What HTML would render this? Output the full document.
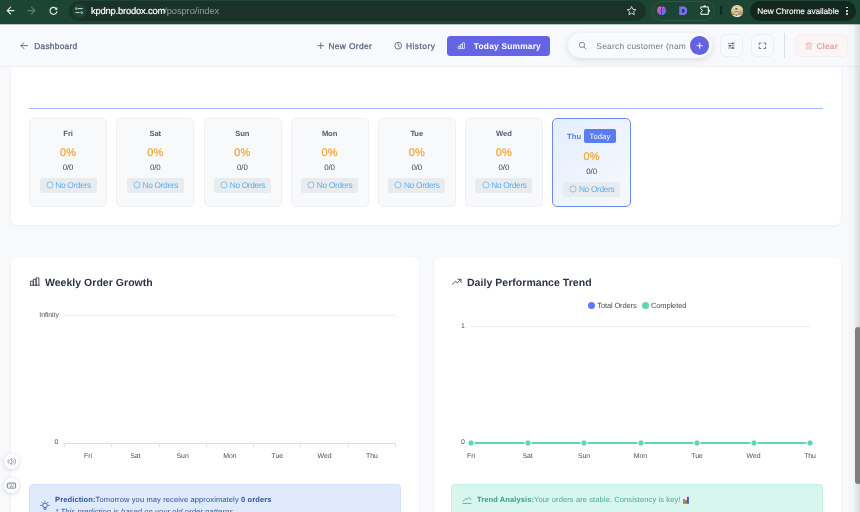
<!DOCTYPE html>
<html>
<head>
<meta charset="utf-8">
<style>
*{box-sizing:border-box;margin:0;padding:0}
html,body{width:860px;height:512px;overflow:hidden;background:#f8f9fb;font-family:"Liberation Sans",sans-serif;}
body{position:relative}
.abs{position:absolute}
.t{position:absolute;white-space:pre;text-rendering:geometricPrecision}
svg{position:absolute;overflow:visible}
#chrome{left:0;top:0;width:860px;height:24px;background:#1c4533;border-bottom:0}
#url{left:69px;top:1px;width:577px;height:19.5px;border-radius:10px;background:#1a322a;}
#header{left:0;top:24px;width:860px;height:42.5px;background:#f8f9fc;border-bottom:1px solid #eceef3;}
#card1{left:11px;top:60px;width:830px;height:165px;background:#fff;border-radius:6px;box-shadow:0 1px 3px rgba(20,30,60,.05)}
#hr{left:29px;top:107.5px;width:794px;height:1px;background:#a9b8f8}
.day{position:absolute;top:118px;width:78px;height:88.5px;background:#f8f9fb;border:1px solid #eef0f4;border-radius:5px}
.day.today{background:linear-gradient(135deg,#e5eefd,#f6f9fd);border:1.2px solid #6b8bf0;width:79px}
.bd{position:absolute;height:14.5px;width:57px;background:#e9ecef;border-radius:2px}
.card{position:absolute;top:257px;height:270px;background:#fff;border-radius:6px;box-shadow:0 1px 3px rgba(20,30,60,.05)}
</style>
</head>
<body><div id="root" style="position:absolute;left:0;top:0;width:860px;height:512px;will-change:transform;overflow:hidden">

<div id="card1" class="abs"></div><div id="hr" class="abs"></div>
<div class="day" style="left:29.20px"></div>
<div class="t" style="left:68.05px;top:130px;font-size:7.6px;line-height:7.6px;color:#525c72;letter-spacing:-0.1px;font-weight:bold;font-style:normal;transform:translateX(-50%);">Fri</div>
<div class="t" style="left:68.05px;top:148px;font-size:11px;line-height:11px;color:#f2a83c;letter-spacing:0.1px;font-weight:normal;font-style:normal;transform:translateX(-50%);-webkit-text-stroke:0.25px #f2a83c">0%</div>
<div class="t" style="left:68.05px;top:164px;font-size:7.9px;line-height:7.9px;color:#3d4350;letter-spacing:-0.12px;font-weight:normal;font-style:normal;transform:translateX(-50%);">0/0</div>
<div class="bd" style="left:39.55px;top:178px"></div>
<svg style="left:45.70px;top:180.8px" width="8" height="8" viewBox="0 0 8 8" fill="none"><circle cx="4" cy="4" r="3.1" stroke="#5ab0ee" stroke-width="0.7"/></svg>
<div class="t" style="left:55.35px;top:181px;font-size:8.4px;line-height:8.4px;color:#5ab0ee;letter-spacing:-0.349px;font-weight:normal;font-style:normal;">No Orders</div>
<div class="day" style="left:116.37px"></div>
<div class="t" style="left:155.22px;top:130px;font-size:7.6px;line-height:7.6px;color:#525c72;letter-spacing:-0.1px;font-weight:bold;font-style:normal;transform:translateX(-50%);">Sat</div>
<div class="t" style="left:155.22px;top:148px;font-size:11px;line-height:11px;color:#f2a83c;letter-spacing:0.1px;font-weight:normal;font-style:normal;transform:translateX(-50%);-webkit-text-stroke:0.25px #f2a83c">0%</div>
<div class="t" style="left:155.22px;top:164px;font-size:7.9px;line-height:7.9px;color:#3d4350;letter-spacing:-0.12px;font-weight:normal;font-style:normal;transform:translateX(-50%);">0/0</div>
<div class="bd" style="left:126.72px;top:178px"></div>
<svg style="left:132.87px;top:180.8px" width="8" height="8" viewBox="0 0 8 8" fill="none"><circle cx="4" cy="4" r="3.1" stroke="#5ab0ee" stroke-width="0.7"/></svg>
<div class="t" style="left:142.52px;top:181px;font-size:8.4px;line-height:8.4px;color:#5ab0ee;letter-spacing:-0.349px;font-weight:normal;font-style:normal;">No Orders</div>
<div class="day" style="left:203.54px"></div>
<div class="t" style="left:242.39px;top:130px;font-size:7.6px;line-height:7.6px;color:#525c72;letter-spacing:-0.1px;font-weight:bold;font-style:normal;transform:translateX(-50%);">Sun</div>
<div class="t" style="left:242.39px;top:148px;font-size:11px;line-height:11px;color:#f2a83c;letter-spacing:0.1px;font-weight:normal;font-style:normal;transform:translateX(-50%);-webkit-text-stroke:0.25px #f2a83c">0%</div>
<div class="t" style="left:242.39px;top:164px;font-size:7.9px;line-height:7.9px;color:#3d4350;letter-spacing:-0.12px;font-weight:normal;font-style:normal;transform:translateX(-50%);">0/0</div>
<div class="bd" style="left:213.89px;top:178px"></div>
<svg style="left:220.04px;top:180.8px" width="8" height="8" viewBox="0 0 8 8" fill="none"><circle cx="4" cy="4" r="3.1" stroke="#5ab0ee" stroke-width="0.7"/></svg>
<div class="t" style="left:229.69px;top:181px;font-size:8.4px;line-height:8.4px;color:#5ab0ee;letter-spacing:-0.349px;font-weight:normal;font-style:normal;">No Orders</div>
<div class="day" style="left:290.71px"></div>
<div class="t" style="left:329.56px;top:130px;font-size:7.6px;line-height:7.6px;color:#525c72;letter-spacing:-0.1px;font-weight:bold;font-style:normal;transform:translateX(-50%);">Mon</div>
<div class="t" style="left:329.56px;top:148px;font-size:11px;line-height:11px;color:#f2a83c;letter-spacing:0.1px;font-weight:normal;font-style:normal;transform:translateX(-50%);-webkit-text-stroke:0.25px #f2a83c">0%</div>
<div class="t" style="left:329.56px;top:164px;font-size:7.9px;line-height:7.9px;color:#3d4350;letter-spacing:-0.12px;font-weight:normal;font-style:normal;transform:translateX(-50%);">0/0</div>
<div class="bd" style="left:301.06px;top:178px"></div>
<svg style="left:307.21px;top:180.8px" width="8" height="8" viewBox="0 0 8 8" fill="none"><circle cx="4" cy="4" r="3.1" stroke="#5ab0ee" stroke-width="0.7"/></svg>
<div class="t" style="left:316.86px;top:181px;font-size:8.4px;line-height:8.4px;color:#5ab0ee;letter-spacing:-0.349px;font-weight:normal;font-style:normal;">No Orders</div>
<div class="day" style="left:377.88px"></div>
<div class="t" style="left:416.73px;top:130px;font-size:7.6px;line-height:7.6px;color:#525c72;letter-spacing:-0.1px;font-weight:bold;font-style:normal;transform:translateX(-50%);">Tue</div>
<div class="t" style="left:416.73px;top:148px;font-size:11px;line-height:11px;color:#f2a83c;letter-spacing:0.1px;font-weight:normal;font-style:normal;transform:translateX(-50%);-webkit-text-stroke:0.25px #f2a83c">0%</div>
<div class="t" style="left:416.73px;top:164px;font-size:7.9px;line-height:7.9px;color:#3d4350;letter-spacing:-0.12px;font-weight:normal;font-style:normal;transform:translateX(-50%);">0/0</div>
<div class="bd" style="left:388.23px;top:178px"></div>
<svg style="left:394.38px;top:180.8px" width="8" height="8" viewBox="0 0 8 8" fill="none"><circle cx="4" cy="4" r="3.1" stroke="#5ab0ee" stroke-width="0.7"/></svg>
<div class="t" style="left:404.03px;top:181px;font-size:8.4px;line-height:8.4px;color:#5ab0ee;letter-spacing:-0.349px;font-weight:normal;font-style:normal;">No Orders</div>
<div class="day" style="left:465.05px"></div>
<div class="t" style="left:503.90000000000003px;top:130px;font-size:7.6px;line-height:7.6px;color:#525c72;letter-spacing:-0.1px;font-weight:bold;font-style:normal;transform:translateX(-50%);">Wed</div>
<div class="t" style="left:503.90000000000003px;top:148px;font-size:11px;line-height:11px;color:#f2a83c;letter-spacing:0.1px;font-weight:normal;font-style:normal;transform:translateX(-50%);-webkit-text-stroke:0.25px #f2a83c">0%</div>
<div class="t" style="left:503.90000000000003px;top:164px;font-size:7.9px;line-height:7.9px;color:#3d4350;letter-spacing:-0.12px;font-weight:normal;font-style:normal;transform:translateX(-50%);">0/0</div>
<div class="bd" style="left:475.40px;top:178px"></div>
<svg style="left:481.55px;top:180.8px" width="8" height="8" viewBox="0 0 8 8" fill="none"><circle cx="4" cy="4" r="3.1" stroke="#5ab0ee" stroke-width="0.7"/></svg>
<div class="t" style="left:491.2px;top:181px;font-size:8.4px;line-height:8.4px;color:#5ab0ee;letter-spacing:-0.349px;font-weight:normal;font-style:normal;">No Orders</div>
<div class="day today" style="left:552.20px"></div>
<div class="t" style="left:567.0px;top:133px;font-size:7.6px;line-height:7.6px;color:#5277e8;letter-spacing:0.093px;font-weight:bold;font-style:normal;">Thu</div>
<div class="abs" style="left:583.6px;top:129.3px;width:32.4px;height:14px;border-radius:2px;background:#5b7bf0"></div>
<div class="t" style="left:589.5px;top:133px;font-size:7.6px;line-height:7.6px;color:#fff;letter-spacing:0.127px;font-weight:normal;font-style:normal;">Today</div>
<div class="t" style="left:591.6px;top:152px;font-size:11px;line-height:11px;color:#f2a83c;letter-spacing:0.1px;font-weight:normal;font-style:normal;transform:translateX(-50%);-webkit-text-stroke:0.25px #f2a83c">0%</div>
<div class="t" style="left:591.6px;top:168px;font-size:7.9px;line-height:7.9px;color:#3d4350;letter-spacing:-0.12px;font-weight:normal;font-style:normal;transform:translateX(-50%);">0/0</div>
<div class="bd" style="left:563.10px;top:182px"></div>
<svg style="left:569.25px;top:184.8px" width="8" height="8" viewBox="0 0 8 8" fill="none"><circle cx="4" cy="4" r="3.1" stroke="#5ab0ee" stroke-width="0.7"/></svg>
<div class="t" style="left:578.9px;top:185px;font-size:8.4px;line-height:8.4px;color:#5ab0ee;letter-spacing:-0.349px;font-weight:normal;font-style:normal;">No Orders</div>
<div class="card" style="left:11px;width:407.6px"></div>
<div class="card" style="left:433.7px;width:407.5px"></div>
<div class="t" style="left:44.9px;top:278px;font-size:10.5px;line-height:10.5px;color:#2c3347;letter-spacing:0.038px;font-weight:bold;font-style:normal;">Weekly Order Growth</div>
<div class="t" style="left:467.0px;top:278px;font-size:10.5px;line-height:10.5px;color:#2c3347;letter-spacing:0.038px;font-weight:bold;font-style:normal;">Daily Performance Trend</div>
<div class="abs" style="left:64.4px;top:315.2px;width:331px;height:1px;background:#ececec"></div>
<div class="abs" style="left:64.4px;top:442.7px;width:331px;height:1px;background:#dcdcdc"></div>
<div class="abs" style="left:63.90px;top:442.7px;width:1px;height:4.5px;background:#e3e3e3"></div>
<div class="abs" style="left:111.20px;top:442.7px;width:1px;height:4.5px;background:#e3e3e3"></div>
<div class="abs" style="left:158.50px;top:442.7px;width:1px;height:4.5px;background:#e3e3e3"></div>
<div class="abs" style="left:205.80px;top:442.7px;width:1px;height:4.5px;background:#e3e3e3"></div>
<div class="abs" style="left:253.10px;top:442.7px;width:1px;height:4.5px;background:#e3e3e3"></div>
<div class="abs" style="left:300.40px;top:442.7px;width:1px;height:4.5px;background:#e3e3e3"></div>
<div class="abs" style="left:347.70px;top:442.7px;width:1px;height:4.5px;background:#e3e3e3"></div>
<div class="abs" style="left:395.00px;top:442.7px;width:1px;height:4.5px;background:#e3e3e3"></div>
<div class="t" style="left:39.3px;top:313px;font-size:6.9px;line-height:6.9px;color:#4e4e4e;letter-spacing:-0.04px;font-weight:normal;font-style:normal;">Infinity</div>
<div class="t" style="left:54.4px;top:440px;font-size:6.9px;line-height:6.9px;color:#4e4e4e;letter-spacing:0px;font-weight:normal;font-style:normal;">0</div>
<div class="t" style="left:88.05px;top:454px;font-size:6.9px;line-height:6.9px;color:#4e4e4e;letter-spacing:-0.05px;font-weight:normal;font-style:normal;transform:translateX(-50%);">Fri</div>
<div class="t" style="left:135.35px;top:454px;font-size:6.9px;line-height:6.9px;color:#4e4e4e;letter-spacing:-0.05px;font-weight:normal;font-style:normal;transform:translateX(-50%);">Sat</div>
<div class="t" style="left:182.64999999999998px;top:454px;font-size:6.9px;line-height:6.9px;color:#4e4e4e;letter-spacing:-0.05px;font-weight:normal;font-style:normal;transform:translateX(-50%);">Sun</div>
<div class="t" style="left:229.95px;top:454px;font-size:6.9px;line-height:6.9px;color:#4e4e4e;letter-spacing:-0.05px;font-weight:normal;font-style:normal;transform:translateX(-50%);">Mon</div>
<div class="t" style="left:277.25px;top:454px;font-size:6.9px;line-height:6.9px;color:#4e4e4e;letter-spacing:-0.05px;font-weight:normal;font-style:normal;transform:translateX(-50%);">Tue</div>
<div class="t" style="left:324.55px;top:454px;font-size:6.9px;line-height:6.9px;color:#4e4e4e;letter-spacing:-0.05px;font-weight:normal;font-style:normal;transform:translateX(-50%);">Wed</div>
<div class="t" style="left:371.84999999999997px;top:454px;font-size:6.9px;line-height:6.9px;color:#4e4e4e;letter-spacing:-0.05px;font-weight:normal;font-style:normal;transform:translateX(-50%);">Thu</div>
<div class="abs" style="left:471px;top:326.3px;width:339px;height:1px;background:#ececec"></div>
<div class="t" style="left:460.9px;top:324px;font-size:6.9px;line-height:6.9px;color:#4e4e4e;letter-spacing:0px;font-weight:normal;font-style:normal;">1</div>
<div class="t" style="left:460.9px;top:440px;font-size:6.9px;line-height:6.9px;color:#4e4e4e;letter-spacing:0px;font-weight:normal;font-style:normal;">0</div>
<div class="abs" style="left:471px;top:442.25px;width:339px;height:1.9px;background:#62d5b6"></div>
<svg style="left:466.00px;top:438.20px" width="10" height="10" viewBox="0 0 10 10"><circle cx="5" cy="5" r="3.2" fill="#62d5b6" stroke="#fff" stroke-width="1"/></svg>
<div class="t" style="left:471.0px;top:454px;font-size:6.9px;line-height:6.9px;color:#4e4e4e;letter-spacing:-0.05px;font-weight:normal;font-style:normal;transform:translateX(-50%);">Fri</div>
<svg style="left:522.50px;top:438.20px" width="10" height="10" viewBox="0 0 10 10"><circle cx="5" cy="5" r="3.2" fill="#62d5b6" stroke="#fff" stroke-width="1"/></svg>
<div class="t" style="left:527.5px;top:454px;font-size:6.9px;line-height:6.9px;color:#4e4e4e;letter-spacing:-0.05px;font-weight:normal;font-style:normal;transform:translateX(-50%);">Sat</div>
<svg style="left:579.00px;top:438.20px" width="10" height="10" viewBox="0 0 10 10"><circle cx="5" cy="5" r="3.2" fill="#62d5b6" stroke="#fff" stroke-width="1"/></svg>
<div class="t" style="left:584.0px;top:454px;font-size:6.9px;line-height:6.9px;color:#4e4e4e;letter-spacing:-0.05px;font-weight:normal;font-style:normal;transform:translateX(-50%);">Sun</div>
<svg style="left:635.50px;top:438.20px" width="10" height="10" viewBox="0 0 10 10"><circle cx="5" cy="5" r="3.2" fill="#62d5b6" stroke="#fff" stroke-width="1"/></svg>
<div class="t" style="left:640.5px;top:454px;font-size:6.9px;line-height:6.9px;color:#4e4e4e;letter-spacing:-0.05px;font-weight:normal;font-style:normal;transform:translateX(-50%);">Mon</div>
<svg style="left:692.00px;top:438.20px" width="10" height="10" viewBox="0 0 10 10"><circle cx="5" cy="5" r="3.2" fill="#62d5b6" stroke="#fff" stroke-width="1"/></svg>
<div class="t" style="left:697.0px;top:454px;font-size:6.9px;line-height:6.9px;color:#4e4e4e;letter-spacing:-0.05px;font-weight:normal;font-style:normal;transform:translateX(-50%);">Tue</div>
<svg style="left:748.50px;top:438.20px" width="10" height="10" viewBox="0 0 10 10"><circle cx="5" cy="5" r="3.2" fill="#62d5b6" stroke="#fff" stroke-width="1"/></svg>
<div class="t" style="left:753.5px;top:454px;font-size:6.9px;line-height:6.9px;color:#4e4e4e;letter-spacing:-0.05px;font-weight:normal;font-style:normal;transform:translateX(-50%);">Wed</div>
<svg style="left:805.00px;top:438.20px" width="10" height="10" viewBox="0 0 10 10"><circle cx="5" cy="5" r="3.2" fill="#62d5b6" stroke="#fff" stroke-width="1"/></svg>
<div class="t" style="left:810.0px;top:454px;font-size:6.9px;line-height:6.9px;color:#4e4e4e;letter-spacing:-0.05px;font-weight:normal;font-style:normal;transform:translateX(-50%);">Thu</div>
<div class="abs" style="left:588.1px;top:302.1px;width:7.2px;height:7.2px;border-radius:50%;background:#5b7cf5"></div>
<div class="abs" style="left:642.1px;top:302.1px;width:7.2px;height:7.2px;border-radius:50%;background:#62d3b3"></div>
<div class="t" style="left:597.3px;top:302px;font-size:7.5px;line-height:7.5px;color:#4e4e4e;letter-spacing:-0.138px;font-weight:normal;font-style:normal;">Total Orders</div>
<div class="t" style="left:650.9px;top:302px;font-size:7.5px;line-height:7.5px;color:#4e4e4e;letter-spacing:-0.098px;font-weight:normal;font-style:normal;">Completed</div>
<div class="abs" style="left:29.3px;top:484.2px;width:371.5px;height:40px;background:#dfeafc;border:1px solid #d4e2fb;border-radius:4px"></div>
<div class="abs" style="left:451.2px;top:484px;width:372px;height:40px;background:#d7f6ee;border:1px solid #c8f0e5;border-radius:4px"></div>
<div class="t" style="left:55.0px;top:496px;font-size:7.5px;line-height:7.5px;color:#2f4f96;letter-spacing:0.127px;font-weight:normal;font-style:normal;"><b>Prediction:</b>Tomorrow you may receive approximately <b>0 orders</b></div>
<div class="t" style="left:55.4px;top:508px;font-size:7.5px;line-height:7.5px;color:#3a5ba0;letter-spacing:0.112px;font-weight:normal;font-style:italic;">* This prediction is based on your old order patterns.</div>
<div class="t" style="left:476.9px;top:496px;font-size:7.5px;line-height:7.5px;color:#4aa890;letter-spacing:0.106px;font-weight:normal;font-style:normal;"><b style="color:#3c9c82">Trend Analysis:</b>Your orders are stable. Consistency is key!</div>
<div class="abs" style="left:3.8000000000000007px;top:453.79999999999995px;width:15.2px;height:15.2px;border-radius:50%;background:#fff;box-shadow:0 1px 5px rgba(0,0,0,.16)"></div>
<div class="abs" style="left:3.8000000000000007px;top:478.09999999999997px;width:15.2px;height:15.2px;border-radius:50%;background:#fff;box-shadow:0 1px 5px rgba(0,0,0,.16)"></div>
<div id="header" class="abs"></div>
<div class="t" style="left:34.2px;top:42px;font-size:8.4px;line-height:8.4px;color:#5a6480;letter-spacing:0.257px;font-weight:normal;font-style:normal;-webkit-text-stroke:0.25px #5a6480">Dashboard</div>
<div class="t" style="left:328.4px;top:42px;font-size:8.4px;line-height:8.4px;color:#5a6480;letter-spacing:0.356px;font-weight:normal;font-style:normal;-webkit-text-stroke:0.25px #5a6480">New Order</div>
<div class="t" style="left:406.0px;top:42px;font-size:8.4px;line-height:8.4px;color:#5a6480;letter-spacing:0.477px;font-weight:normal;font-style:normal;-webkit-text-stroke:0.25px #5a6480">History</div>
<div class="abs" style="left:447.4px;top:35.6px;width:102.8px;height:20.4px;border-radius:3.5px;background:#6365e5"></div>
<div class="t" style="left:473.8px;top:42px;font-size:8.4px;line-height:8.4px;color:#fff;letter-spacing:0.204px;font-weight:bold;font-style:normal;">Today Summary</div>
<div class="abs" style="left:568.4px;top:33.1px;width:143.8px;height:25px;border-radius:12.5px;background:#f9fafd;box-shadow:0 2px 7px rgba(20,30,60,.13)"></div>
<div class="t" style="left:596.3px;top:42px;font-size:8.4px;line-height:8.4px;color:#787878;letter-spacing:0.254px;font-weight:normal;font-style:normal;">Search customer (nam</div>
<div class="abs" style="left:690.2px;top:36.4px;width:18.6px;height:18.6px;border-radius:50%;background:#6262e2"></div>
<div class="abs" style="left:719.5px;top:33.8px;width:23.6px;height:23.6px;border-radius:6px;background:#f9fafd;border:1px solid #eceef5"></div>
<div class="abs" style="left:750.8px;top:33.8px;width:23.6px;height:23.6px;border-radius:6px;background:#f9fafd;border:1px solid #eceef5"></div>
<div class="abs" style="left:784.3px;top:33.4px;width:1px;height:24.2px;background:#dcdfe8"></div>
<div class="abs" style="left:794.5px;top:34.4px;width:53px;height:22.3px;border-radius:5px;background:#fbf5f6;border:1px solid #fbeced"></div>
<div class="t" style="left:816.4px;top:42px;font-size:8.4px;line-height:8.4px;color:#e8a0a5;letter-spacing:0.149px;font-weight:bold;font-style:normal;">Clear</div>
<div id="chrome" class="abs"></div><div class="abs" style="left:0;top:24px;width:860px;height:1px;background:#b6c3bf"></div><div id="url" class="abs"></div>
<div class="abs" style="left:72.3px;top:3.6px;width:14px;height:14px;border-radius:50%;background:#1c4533"></div>
<div class="t" style="left:91.0px;top:6px;font-size:9.4px;line-height:9.4px;color:#fff;letter-spacing:-0.19px;font-weight:normal;font-style:normal;-webkit-text-stroke:0.2px #fff">kpdnp.brodox.com</div>
<div class="t" style="left:164.2px;top:6px;font-size:9.4px;line-height:9.4px;color:#8da197;letter-spacing:-0.1px;font-weight:normal;font-style:normal;">/pospro/index</div>
<div class="abs" style="left:651.5px;top:0.8px;width:63.5px;height:20px;border-radius:10px;border:1px solid #2e5443"></div>
<div class="abs" style="left:720.2px;top:6px;width:1.5px;height:9.3px;background:#13291f"></div>
<svg style="left:730.9px;top:4.7px" width="12.3" height="12.3" viewBox="0 0 12.3 12.3"><defs><clipPath id="av"><circle cx="6.15" cy="6.15" r="6.1"/></clipPath><linearGradient id="avg" x1="0" y1="0" x2="0" y2="1"><stop offset="0" stop-color="#eee4b8"/><stop offset="0.22" stop-color="#e6d6a6"/><stop offset="0.5" stop-color="#d8c08e"/><stop offset="0.78" stop-color="#b89868"/><stop offset="0.86" stop-color="#e8dcc4"/><stop offset="1" stop-color="#f2ecdc"/></linearGradient></defs><g clip-path="url(#av)"><rect width="12.3" height="12.3" fill="url(#avg)"/><rect x="0" y="1.2" width="12.3" height="0.7" fill="#c9b98a" opacity=".7"/><rect x="7.2" y="5.4" width="5.1" height="4.4" fill="#b89a6a" opacity=".55"/><rect x="4.2" y="3.3" width="2.3" height="7.2" fill="#e8dec4"/><rect x="4.3" y="3.2" width="2.1" height="1.5" fill="#4e402a"/><rect x="4.3" y="6" width="2.1" height="1.2" fill="#77704c"/><rect x="4.6" y="9.6" width="1.6" height="1.2" fill="#6b5238"/></g></svg>
<div class="abs" style="left:750.1px;top:0.8px;width:105.8px;height:20px;border-radius:10px;background:#13271e"></div>
<div class="t" style="left:757.3px;top:7px;font-size:8.3px;line-height:8.3px;color:#fff;letter-spacing:-0.093px;font-weight:normal;font-style:normal;-webkit-text-stroke:0.1px #fff">New Chrome available</div>
<div class="abs" style="left:846.1px;top:6.699999999999999px;width:1.8px;height:1.8px;border-radius:50%;background:#fff"></div>
<div class="abs" style="left:846.1px;top:10.0px;width:1.8px;height:1.8px;border-radius:50%;background:#fff"></div>
<div class="abs" style="left:846.1px;top:13.299999999999999px;width:1.8px;height:1.8px;border-radius:50%;background:#fff"></div>
<div class="abs" style="left:846px;top:24px;width:14px;height:488px;background:linear-gradient(90deg,rgba(0,0,0,0),rgba(0,0,0,.022) 58%,rgba(0,0,0,.055) 65%,rgba(0,0,0,.11))"></div>
<div class="abs" style="left:854.8px;top:326.8px;width:6px;height:157px;border-radius:3px;background:#7f7f7f"></div>
<svg style="left:0px;top:0px" width="860" height="24" viewBox="0 0 860 24" fill="none"><path d="M14 10.6H7.2M10.6 7.2L7.2 10.6L10.6 14" stroke="#e4ebe6" stroke-width="1.15" stroke-linecap="round" stroke-linejoin="round"/><path d="M28.1 10.6H34.9M31.5 7.2L34.9 10.6L31.5 14" stroke="#5b8070" stroke-width="1.15" stroke-linecap="round" stroke-linejoin="round"/><path d="M56.6 9.2A3.5 3.5 0 1 0 56.9 11.6" stroke="#e4ebe6" stroke-width="1.15" stroke-linecap="round"/><path d="M57.3 6.9V9.7H54.5Z" fill="#e4ebe6"/><circle cx="76.4" cy="8.6" r="0.85" stroke="#e4ebe6" stroke-width="0.75"/><path d="M78.4 8.6H82.3M75.9 12.6H79.3" stroke="#e4ebe6" stroke-width="0.9" stroke-linecap="round"/><circle cx="81.6" cy="12.6" r="0.85" stroke="#e4ebe6" stroke-width="0.75"/><polygon points="631.60,6.40 632.83,9.30 635.97,9.58 633.60,11.65 634.30,14.72 631.60,13.10 628.90,14.72 629.60,11.65 627.23,9.58 630.37,9.30" stroke="#cfd8d2" stroke-width="0.95" stroke-linejoin="round"/><defs><linearGradient id="bl" x1="0.2" y1="0" x2="0.6" y2="1"><stop offset="0" stop-color="#f6a24e"/><stop offset="0.3" stop-color="#e862b4"/><stop offset="0.65" stop-color="#c95fe0"/><stop offset="1" stop-color="#9a62f2"/></linearGradient><linearGradient id="br" x1="0.3" y1="0" x2="0.7" y2="1"><stop offset="0" stop-color="#b95ee8"/><stop offset="0.5" stop-color="#8768f4"/><stop offset="1" stop-color="#52a6f6"/></linearGradient></defs><path d="M661.2 6.9C660.4 6.3 659.2 6.4 658.7 7.3C657.8 7.5 657.4 8.4 657.7 9.2C656.9 9.8 656.8 10.9 657.4 11.6C657.2 12.6 657.8 13.4 658.6 13.6C658.9 14.6 660.2 15.2 661.2 14.6Z" fill="url(#bl)"/><path d="M661.9 6.9C662.7 6.3 663.9 6.4 664.4 7.3C665.3 7.5 665.7 8.4 665.4 9.2C666.2 9.8 666.3 10.9 665.7 11.6C665.9 12.6 665.3 13.4 664.5 13.6C664.2 14.6 662.9 15.2 661.9 14.6Z" fill="url(#br)"/><path d="M659.2 8.6C659.8 8.6 660.2 8.9 660.3 9.4M658.2 10.8H659.6M659.4 12.8C659.5 12.2 659.9 11.9 660.4 11.9M663.9 8.6C663.3 8.6 662.9 8.9 662.8 9.4M664.9 10.8H663.5M663.7 12.8C663.6 12.2 663.2 11.9 662.7 11.9" stroke="#1c4533" stroke-opacity="0.55" stroke-width="0.55" stroke-linecap="round"/><path fill-rule="evenodd" d="M679.3 6.5H683.6C686 6.5 687.2 8.3 687.2 10.8C687.2 13.3 686 15.1 683.6 15.1H679.3ZM681.9 8.9V12.7H683.3C684.2 12.7 684.6 12 684.6 10.8C684.6 9.6 684.2 8.9 683.3 8.9Z" fill="#7d6df6"/><path d="M700.9 6.9H708.3V14.3H700.9V12.4L702.5 10.6L700.9 8.8Z" stroke="#fff" stroke-width="1" stroke-linejoin="round"/><path d="M703.3 6.7A1.4 1.5 0 0 1 706.1 6.7Z" fill="#fff"/><path d="M708.5 9.4A1.5 1.3 0 0 1 708.5 12Z" fill="#fff"/></svg>
<svg style="left:0px;top:24px" width="860" height="42" viewBox="0 24 860 42" fill="none"><path d="M27.6 45.6H20.9M24 42.6L20.9 45.6L24 48.7" stroke="#525d7c" stroke-width="0.85" stroke-linecap="round" stroke-linejoin="round"/><path d="M318 45.7H323.6M320.8 42.9V48.5" stroke="#525d7c" stroke-width="0.85" stroke-linecap="round"/><circle cx="398.2" cy="45.7" r="3.35" stroke="#525d7c" stroke-width="0.85"/><path d="M398.2 43.7V45.8L399.6 46.8" stroke="#525d7c" stroke-width="0.8" stroke-linecap="round" stroke-linejoin="round"/><rect x="458.2" y="46.3" width="2.1" height="2.3" rx="0.3" stroke="#fff" stroke-width="0.7"/><rect x="460.3" y="44.5" width="2.1" height="4.1" rx="0.3" stroke="#fff" stroke-width="0.7"/><rect x="462.4" y="42.8" width="2.1" height="5.8" rx="0.3" stroke="#fff" stroke-width="0.7"/><circle cx="582" cy="44.9" r="2.65" stroke="#5c6b92" stroke-width="0.75"/><path d="M584 46.9L585.8 48.8" stroke="#5c6b92" stroke-width="0.8" stroke-linecap="round"/><path d="M697.1 45.7H702.3M699.7 43.1V48.3" stroke="#fff" stroke-width="0.95" stroke-linecap="round"/><path d="M728 43.4H734.6M728 45.7H734.6M728 48H734.6" stroke="#454d6a" stroke-width="0.6"/><rect x="732" y="42.6" width="1.5" height="1.6" fill="#454d6a"/><rect x="729.3" y="44.9" width="1.5" height="1.6" fill="#454d6a"/><rect x="732" y="47.2" width="1.5" height="1.6" fill="#454d6a"/><path d="M759.2 44.7V43H760.9M763.9 43H765.6V44.7M765.6 46.8V48.5H763.9M760.9 48.5H759.2V46.8" stroke="#454d6a" stroke-width="0.75" stroke-linejoin="round" stroke-linecap="round"/><path d="M805.7 43.9H812M807.6 43.9V42.7H810.1V43.9M806.4 43.9L806.8 49.1H810.9L811.3 43.9M808 45.4V47.7M809.7 45.4V47.7" stroke="#efb2b6" stroke-width="0.75" stroke-linejoin="round" stroke-linecap="round"/></svg>
<svg style="left:0px;top:250px" width="860" height="262" viewBox="0 250 860 262" fill="none"><path d="M30.6 285.2V281.2H33.3V285.2M33.3 285.2V279.3H36.1V285.2M36.1 285.2V277.9H38.9V285.2M30.2 285.2H39.2" stroke="#363e54" stroke-width="0.9" stroke-linejoin="round" stroke-linecap="round"/><path d="M452.3 284.3L455.4 281.3L457.2 282.8L460.7 279.6M457.9 279.3H461V282.4" stroke="#363e54" stroke-width="0.85" stroke-linejoin="round" stroke-linecap="round"/><circle cx="45" cy="505.4" r="2.3" stroke="#3b5ea8" stroke-width="0.85"/><path d="M44 508V509.3H46V508M40.6 505.4H41.9M48.1 505.4H49.4M42 502.3L42.8 503.2M48 502.3L47.2 503.2M45 501.2V502.2" stroke="#3b5ea8" stroke-width="0.8" stroke-linecap="round"/><path d="M463 501.3L465.6 498.6L467 499.6L468.9 497.4L470.9 499.8M462.9 503.4H471" stroke="#4cae94" stroke-width="0.85" stroke-linejoin="round" stroke-linecap="round"/><rect x="682.8" y="496.2" width="6.3" height="7.6" fill="#e9eef3"/><rect x="683" y="499" width="1.9" height="4.8" fill="#4cae4a"/><rect x="685.1" y="500.2" width="1.8" height="3.6" fill="#d04a4a"/><rect x="687" y="496.9" width="1.9" height="6.9" fill="#3a60c8"/><path d="M8 460.2H9.6L11.7 458.4V464.6L9.6 462.8H8Z" stroke="#8a90a2" stroke-width="0.8" stroke-linejoin="round"/><path d="M13.2 459.8C14 460.8 14 462.2 13.2 463.2M14.6 458.6C16 460.2 16 462.8 14.6 464.4" stroke="#8a90a2" stroke-width="0.8" stroke-linecap="round"/><rect x="7.3" y="483.1" width="8.3" height="5" rx="0.8" stroke="#6a7086" stroke-width="0.9"/><path d="M10 486.4H13M9 484.8H9.4M11.2 484.8H11.6M13.4 484.8H13.8" stroke="#6a7086" stroke-width="0.7" stroke-linecap="round"/></svg>
</div></body></html>
